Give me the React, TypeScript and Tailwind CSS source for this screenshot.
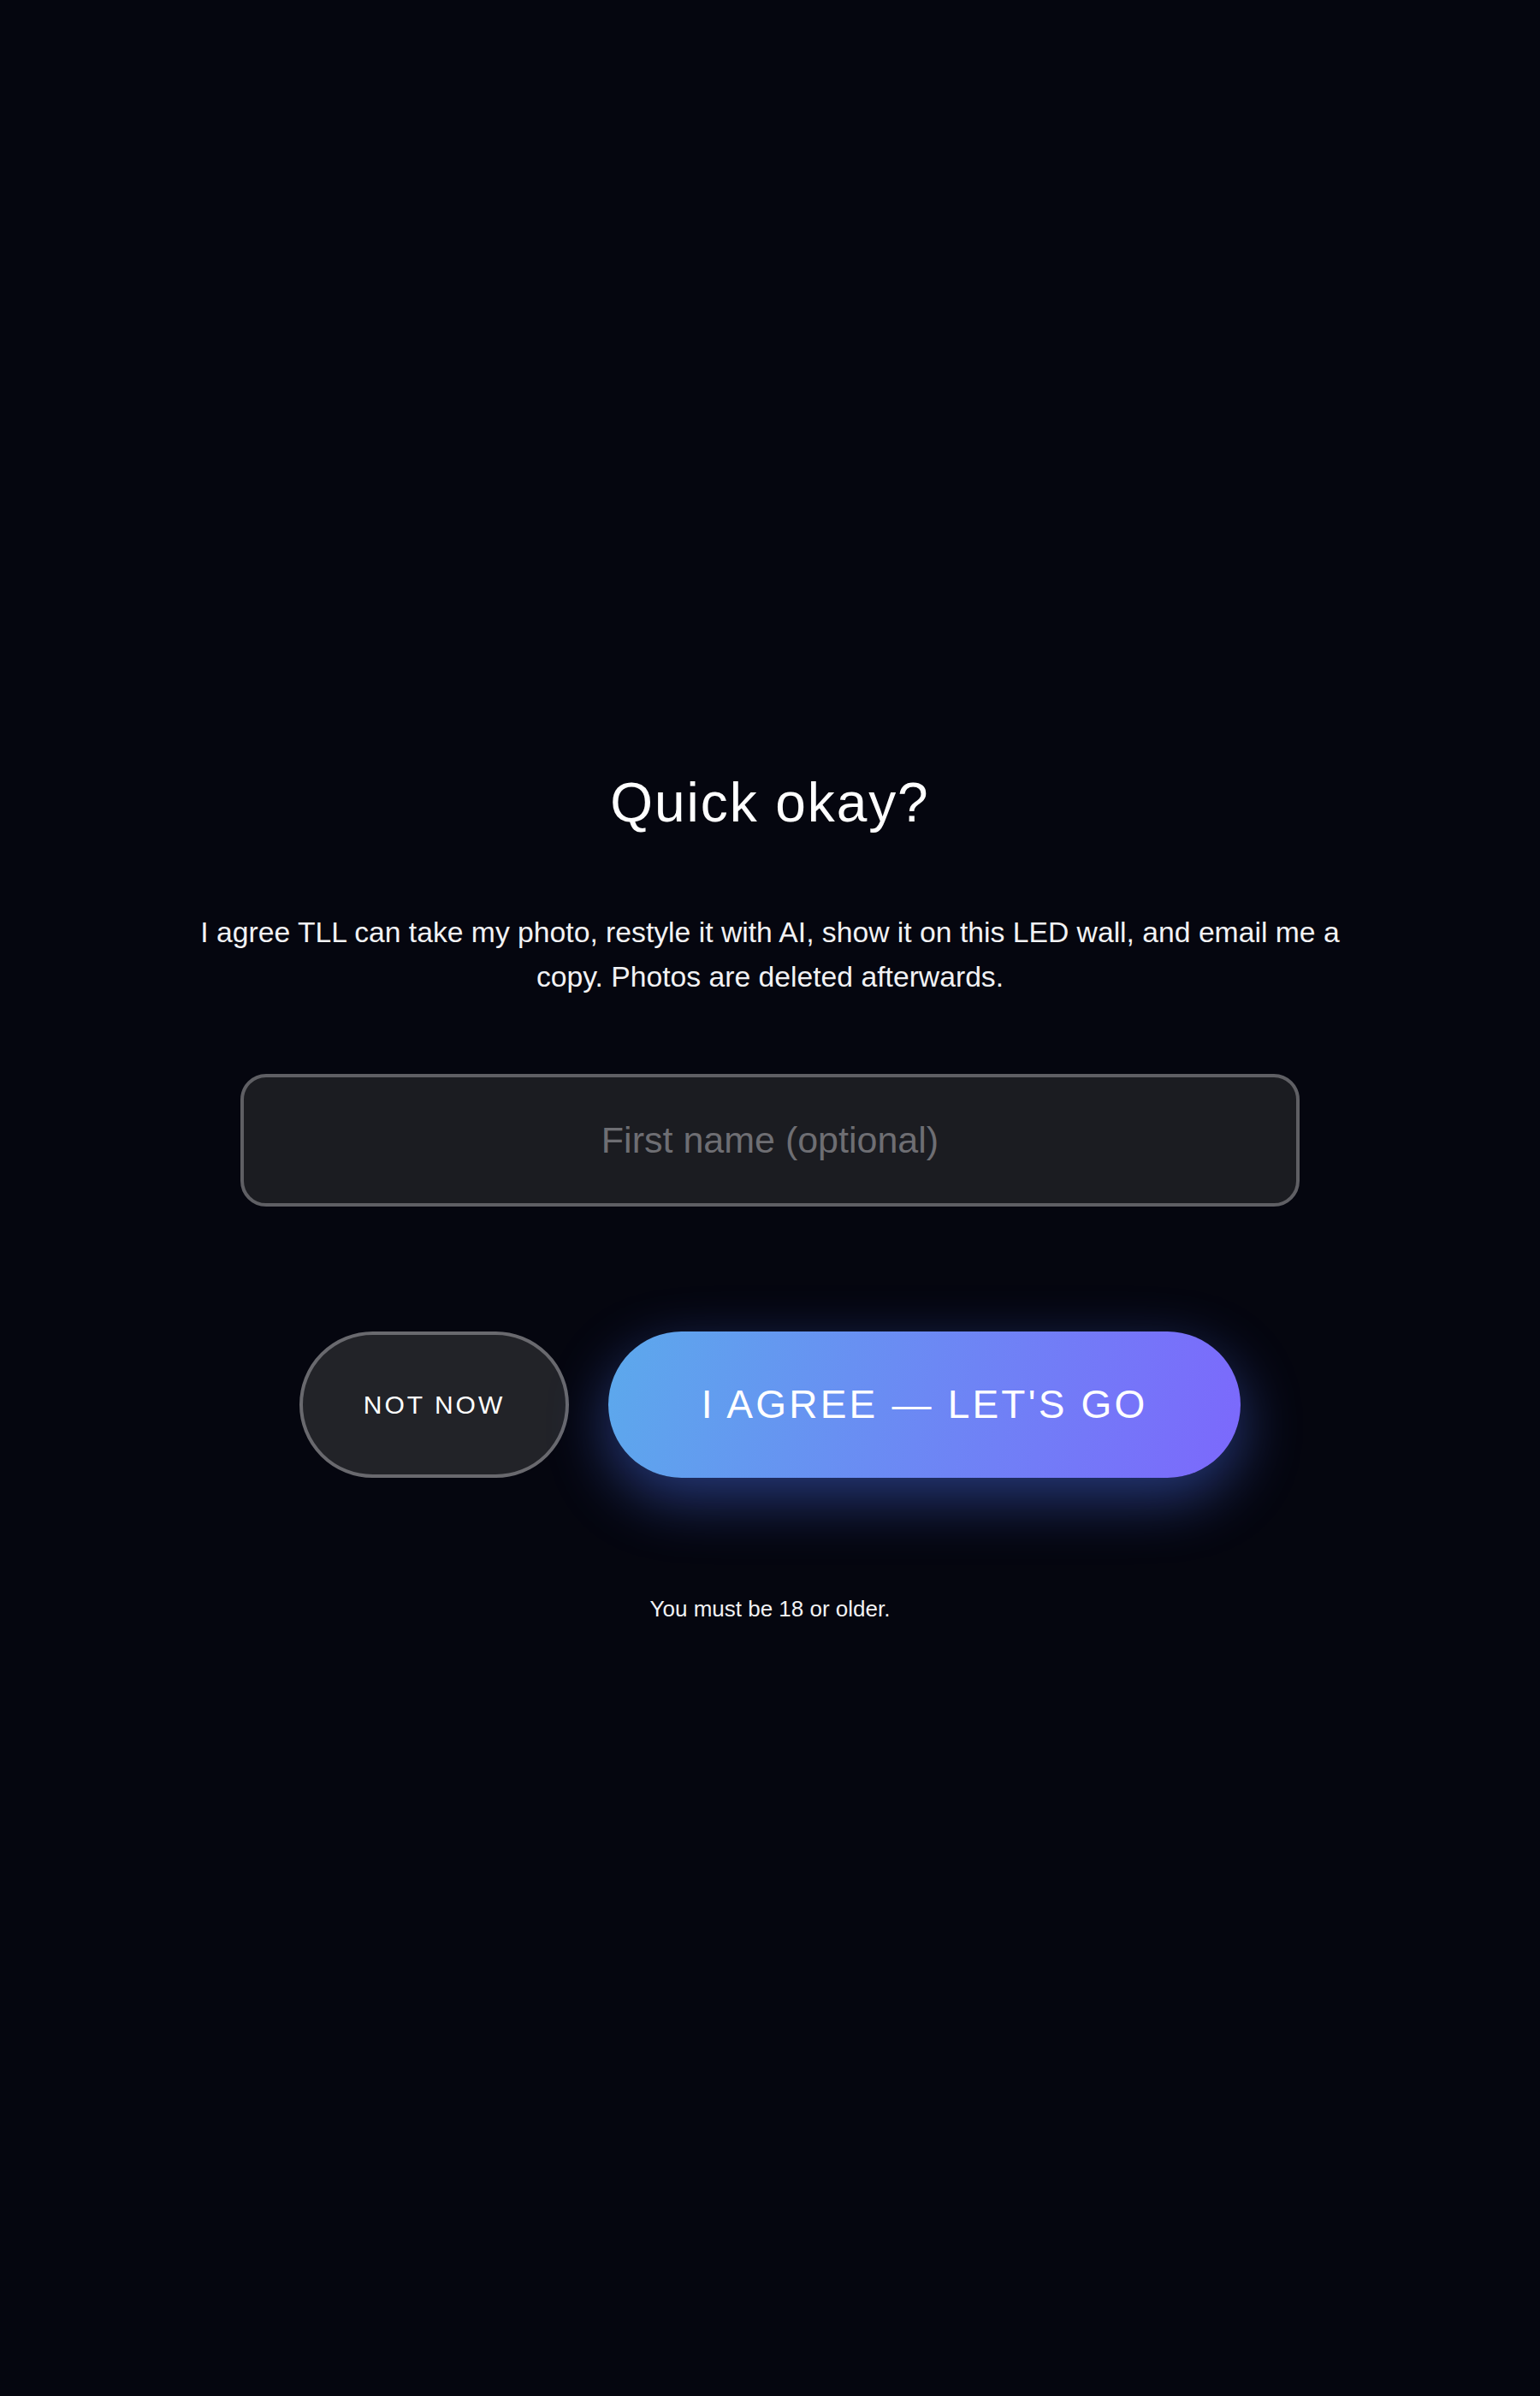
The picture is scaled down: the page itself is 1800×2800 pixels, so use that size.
import { useState } from "react";

export default function App() {
  const [name, setName] = useState("");

  return (
    <div className="min-h-screen bg-[#05060f] flex items-center justify-center font-['Liberation_Sans',Arial,sans-serif] text-white">
      <div className="flex flex-col items-center w-[1360px]">
        {/* Heading */}
        <h1 className="text-[64px] leading-[1.2] font-normal tracking-[0.03em]">Quick okay?</h1>

        {/* Consent copy */}
        <p className="mt-[86px] text-[33.7px] leading-[52px] text-center text-[#f2f2f4]">
          I agree TLL can take my photo, restyle it with AI, show it on this LED wall, and email me a copy. Photos
          are deleted afterwards.
        </p>

        {/* Name field */}
        <input
          type="text"
          value={name}
          onChange={(e) => setName(e.target.value)}
          placeholder="First name (optional)"
          className="mt-[88px] w-[1238px] h-[155px] rounded-[30px] border-4 border-[#5f5f64] bg-[#1b1c21] text-center text-[43px] text-white placeholder-[#6e6e73] outline-none"
        />

        {/* Actions */}
        <div className="mt-[146px] flex items-center gap-[46px]">
          <button className="h-[171px] px-[71px] rounded-full border-4 border-[#69696e] bg-[#222328] text-[30px] tracking-[0.1em] text-white cursor-pointer">
            NOT NOW
          </button>
          <button className="h-[171px] w-[739px] rounded-full bg-[linear-gradient(105deg,#5ca9ec_0%,#6c88f4_50%,#7c68fc_100%)] text-[46px] tracking-[0.07em] text-white cursor-pointer shadow-[0_24px_70px_rgba(80,120,255,0.45)]">
            I AGREE — LET'S GO
          </button>
        </div>

        <p className="mt-[134px] text-[26px] leading-[1.5] text-[#f2f2f4]">You must be 18 or older.</p>
      </div>
    </div>
  );
}
